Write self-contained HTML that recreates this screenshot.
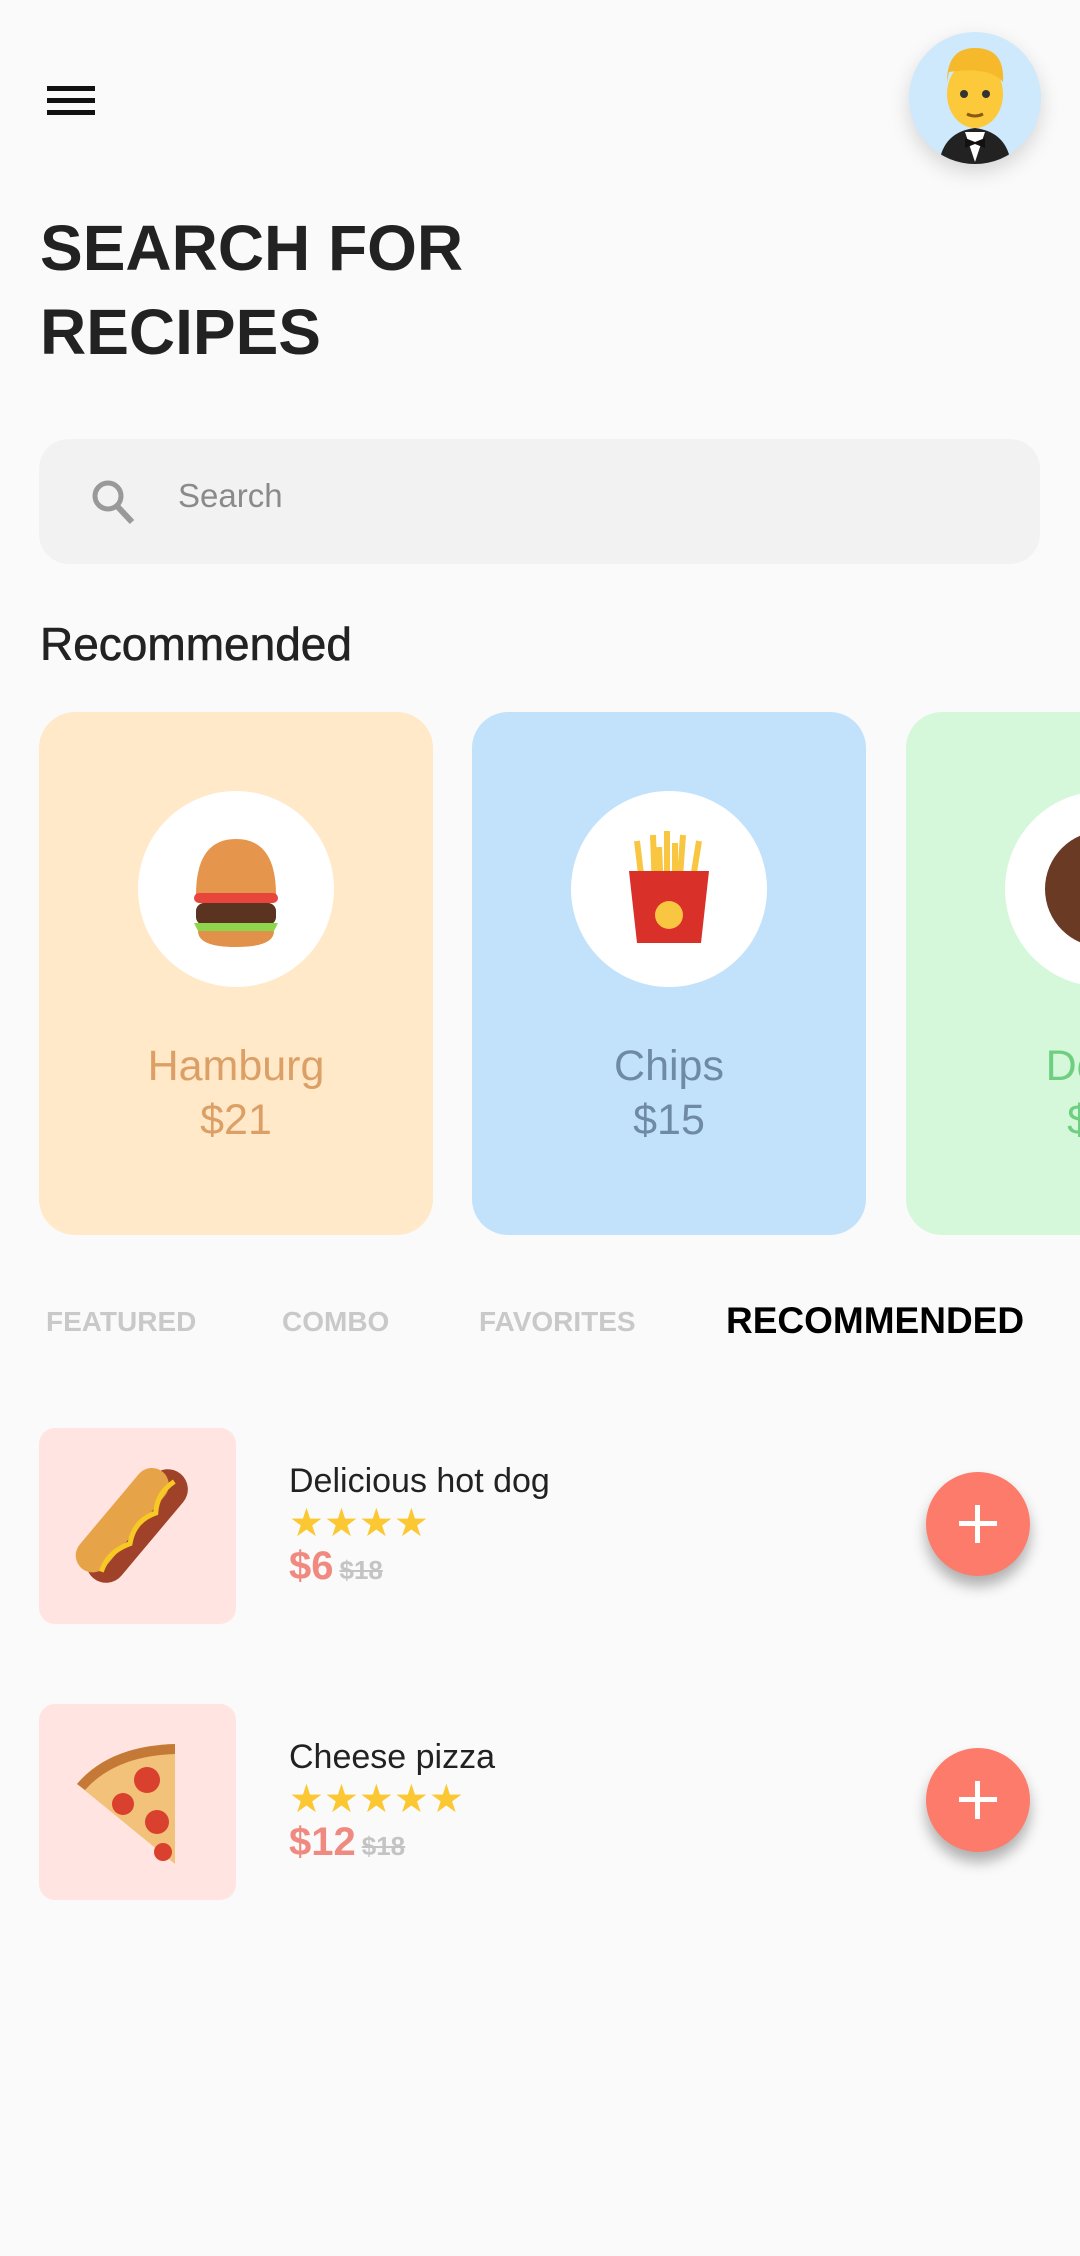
<!DOCTYPE html>
<html><head><meta charset="utf-8"><style>
*{margin:0;padding:0;box-sizing:border-box}
html{width:1080px;height:2256px;overflow:hidden}
body{width:1080px;height:2256px;background:#fafafa;font-family:"Liberation Sans",sans-serif;position:relative;overflow:hidden}
.a{position:absolute}
.bar{position:absolute;left:47px;width:48px;height:5px;background:#111}
.card{position:absolute;top:712px;width:394px;height:523px;border-radius:36px;overflow:hidden}
.circ{position:absolute;left:99px;top:79px;width:196px;height:196px;border-radius:50%;background:#fff}
.cn{position:absolute;left:0;width:394px;text-align:center;font-size:43px}
.tab{position:absolute;top:1306px;font-size:28px;font-weight:bold;color:#c9c9c9}
.img{position:absolute;left:39px;width:197px;height:196px;border-radius:16px;background:#ffe4e1}
.fab{position:absolute;left:926px;width:104px;height:104px;border-radius:50%;background:#fd7b6a;box-shadow:0 10px 14px rgba(0,0,0,.3)}
.fab:before{content:"";position:absolute;left:33px;top:49px;width:38px;height:5px;background:#fff}
.fab:after{content:"";position:absolute;left:49px;top:33px;width:5px;height:38px;background:#fff}
.t{position:absolute;left:289px;font-size:34px;color:#222}
.st{position:absolute;left:289px;font-size:39px;color:#fbc834;letter-spacing:0px;line-height:40px}
.p{position:absolute;left:289px;font-size:40px;font-weight:bold;color:#f08a80}
.p s{font-size:26px;color:#c4c4c4;font-weight:bold;margin-left:6px}
</style></head><body>
<div class="bar" style="top:86px"></div><div class="bar" style="top:98px"></div><div class="bar" style="top:110px"></div>
<div class="a" style="left:909px;top:32px;width:132px;height:132px;border-radius:50%;background:#cde9fb;box-shadow:0 8px 20px rgba(0,0,0,.15);overflow:hidden">
<svg width="132" height="132" viewBox="0 0 132 132"><path d="M30 132 Q34 100 66 96 Q98 100 102 132Z" fill="#222"/><path d="M56 100 L66 130 L76 100Z" fill="#fff"/><path d="M56 106 L66 110 L76 106 L76 116 L66 112 L56 116Z" fill="#111"/><ellipse cx="66" cy="62" rx="28" ry="34" fill="#fcc93a"/><path d="M38 50 Q38 16 66 16 Q96 16 94 50 Q80 34 40 40Z" fill="#f5b92b"/><circle cx="55" cy="62" r="4" fill="#333"/><circle cx="77" cy="62" r="4" fill="#333"/><path d="M58 82 Q66 86 74 82" stroke="#8a5a10" stroke-width="3" fill="none"/></svg></div>
<div class="a" style="left:40px;top:206px;font-size:64px;font-weight:bold;color:#222;line-height:84px">SEARCH FOR<br>RECIPES</div>
<div class="a" style="left:39px;top:439px;width:1001px;height:125px;border-radius:30px;background:#f2f2f2"></div>
<svg class="a" style="left:90px;top:478px" width="48" height="48" viewBox="0 0 48 48"><circle cx="18" cy="18" r="13" stroke="#999" stroke-width="5" fill="none"/><path d="M27 28 L42 44" stroke="#999" stroke-width="6"/></svg>
<div class="a" style="left:178px;top:477px;font-size:33px;color:#8a8a8a">Search</div>
<div class="a" style="left:40px;top:617px;font-size:46px;color:#222;-webkit-text-stroke:0.6px #222">Recommended</div>
<div class="card" style="left:39px;background:#ffe9c9"><div class="circ"><svg width="196" height="196" viewBox="0 0 196 196"><path d="M58 104 Q58 48 98 48 Q138 48 138 104Z" fill="#e5954c"/><rect x="56" y="102" width="84" height="10" rx="5" fill="#e8453c"/><rect x="58" y="112" width="80" height="22" rx="8" fill="#5a3420"/><path d="M56 132 L140 132 L136 140 L60 140Z" fill="#8ed64b"/><path d="M60 140 L136 140 Q136 156 98 156 Q60 156 60 140Z" fill="#e2914a"/></svg></div><div class="cn" style="top:330px;color:#dca066">Hamburg</div><div class="cn" style="top:384px;color:#dca066">$21</div></div>
<div class="card" style="left:472px;background:#c2e2fc"><div class="circ"><svg width="196" height="196" viewBox="0 0 196 196"><g stroke="#f8c640" stroke-width="6"><path d="M72 100 L66 50M84 100 L82 44M96 100 L96 40M108 100 L112 44M120 100 L128 50M90 100 L88 56M104 100 L104 52"/></g><path d="M58 80 L138 80 L130 152 L66 152Z" fill="#d9302a"/><circle cx="98" cy="124" r="14" fill="#f8c640"/></svg></div><div class="cn" style="top:330px;color:#6f8aa5">Chips</div><div class="cn" style="top:384px;color:#6f8aa5">$15</div></div>
<div class="a" style="left:906px;top:712px;width:174px;height:523px;overflow:hidden"><div class="card" style="left:0;top:0;background:#d5f8da"><div class="circ"><svg width="196" height="196" viewBox="0 0 196 196"><circle cx="98" cy="98" r="58" fill="#6b3a24"/><circle cx="98" cy="98" r="16" fill="#fff"/></svg></div><div class="cn" style="top:330px;color:#6fcf80">Donut</div><div class="cn" style="top:384px;color:#6fcf80">$18</div></div></div>
<div class="tab" style="left:46px">FEATURED</div>
<div class="tab" style="left:282px">COMBO</div>
<div class="tab" style="left:479px">FAVORITES</div>
<div class="tab" style="left:726px;top:1300px;font-size:37px;color:#000">RECOMMENDED</div>
<div class="img" style="top:1428px"><svg width="197" height="196" viewBox="0 0 197 196"><g transform="rotate(40 98 98)"><rect x="78" y="30" width="40" height="136" rx="20" fill="#a0412a"/><rect x="66" y="40" width="34" height="126" rx="17" fill="#e7a347"/><path d="M98 40 Q92 60 104 76 Q92 96 104 116 Q92 136 100 156" stroke="#f6c924" stroke-width="5" fill="none"/></g></svg></div>
<div class="t" style="top:1462px">Delicious hot dog</div>
<div class="st" style="top:1504px">★★★★</div>
<div class="p" style="top:1544px">$6<s>$18</s></div>
<div class="fab" style="top:1472px"></div>
<div class="img" style="top:1704px"><svg width="197" height="196" viewBox="0 0 197 196"><path d="M136 40 L136 160 L38 80 Q70 42 136 40Z" fill="#f3c27a"/><path d="M136 40 Q70 42 38 80 L46 86 Q76 52 136 50Z" fill="#c47a36"/><circle cx="108" cy="76" r="13" fill="#d9402d"/><circle cx="84" cy="100" r="11" fill="#d9402d"/><circle cx="118" cy="118" r="12" fill="#d9402d"/><circle cx="124" cy="148" r="9" fill="#d9402d"/></svg></div>
<div class="t" style="top:1738px">Cheese pizza</div>
<div class="st" style="top:1780px">★★★★★</div>
<div class="p" style="top:1820px">$12<s>$18</s></div>
<div class="fab" style="top:1748px"></div>
</body></html>
